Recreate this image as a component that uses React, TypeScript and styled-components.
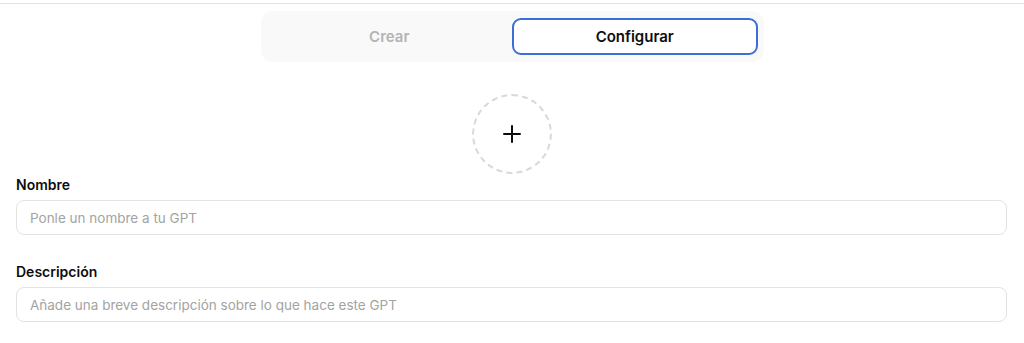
import React from 'react';
import styled, { createGlobalStyle } from 'styled-components';

const GlobalStyle = createGlobalStyle`
  html, body {
    margin: 0;
    padding: 0;
    background: #ffffff;
  }
  body {
    font-family: Inter, "Noto Sans", "Liberation Sans", sans-serif;
    color: #0d0d0d;
  }
`;

const Page = styled.div`
  width: 1024px;
  height: 343px;
  box-sizing: border-box;
  padding-top: 3px;
  overflow: hidden;
`;

const Panel = styled.div`
  border-top: 1px solid #e3e3e3;
  padding: 7px 16px 0;
  display: flex;
  flex-direction: column;
`;

const TabBar = styled.div`
  align-self: center;
  width: 503px;
  height: 51px;
  box-sizing: border-box;
  padding: 7px 6px 7px 6px;
  background: #f9f9f9;
  border-radius: 12px;
  display: grid;
  grid-template-columns: 1fr 1fr;
  gap: 0;
`;

const Tab = styled.button<{ $active?: boolean }>`
  all: unset;
  display: flex;
  align-items: center;
  justify-content: center;
  box-sizing: border-box;
  height: 37px;
  border-radius: 9px;
  font-family: Inter, "Liberation Sans", sans-serif;
  font-size: 15px;
  font-weight: 600;
  color: ${(p) => (p.$active ? '#0d0d0d' : '#b4b4b4')};
  background: ${(p) => (p.$active ? '#ffffff' : 'transparent')};
  border: ${(p) => (p.$active ? '2px solid #3c6fd6' : '2px solid transparent')};
`;

const AvatarRow = styled.div`
  display: flex;
  justify-content: center;
  margin-top: 32px;
`;

const Avatar = styled.div`
  width: 80px;
  height: 80px;
  box-sizing: border-box;
  border-radius: 50%;
  border: 2px dashed #d9d9d9;
  display: flex;
  align-items: center;
  justify-content: center;
`;

const Field = styled.div`
  display: flex;
  flex-direction: column;
  gap: 7px;
  margin-top: ${(p: { $top: number }) => p.$top}px;
`;

const Label = styled.label`
  font-size: 14px;
  font-weight: 600;
  line-height: 17px;
  color: #0d0d0d;
`;

const Input = styled.input`
  box-sizing: border-box;
  width: 991px;
  height: 35px;
  padding: 0 13px;
  border: 1px solid #e3e3e3;
  border-radius: 8px;
  font-family: Inter, "Liberation Sans", sans-serif;
  font-size: 13.5px;
  color: #0d0d0d;
  outline: none;
  &::placeholder {
    color: #a3a3a3;
  }
`;

export default function App() {
  return (
    <>
      <GlobalStyle />
      <Page>
        <Panel>
          <TabBar>
            <Tab>Crear</Tab>
            <Tab $active>Configurar</Tab>
          </TabBar>
          <AvatarRow>
            <Avatar>
              <svg width="20" height="20" viewBox="0 0 20 20" fill="none">
                <path d="M10 2v16M2 10h16" stroke="#0d0d0d" strokeWidth="2" strokeLinecap="round" />
              </svg>
            </Avatar>
          </AvatarRow>
          <Field $top={2}>
            <Label>Nombre</Label>
            <Input placeholder="Ponle un nombre a tu GPT" />
          </Field>
          <Field $top={28}>
            <Label>Descripción</Label>
            <Input placeholder="Añade una breve descripción sobre lo que hace este GPT" />
          </Field>
        </Panel>
      </Page>
    </>
  );
}
